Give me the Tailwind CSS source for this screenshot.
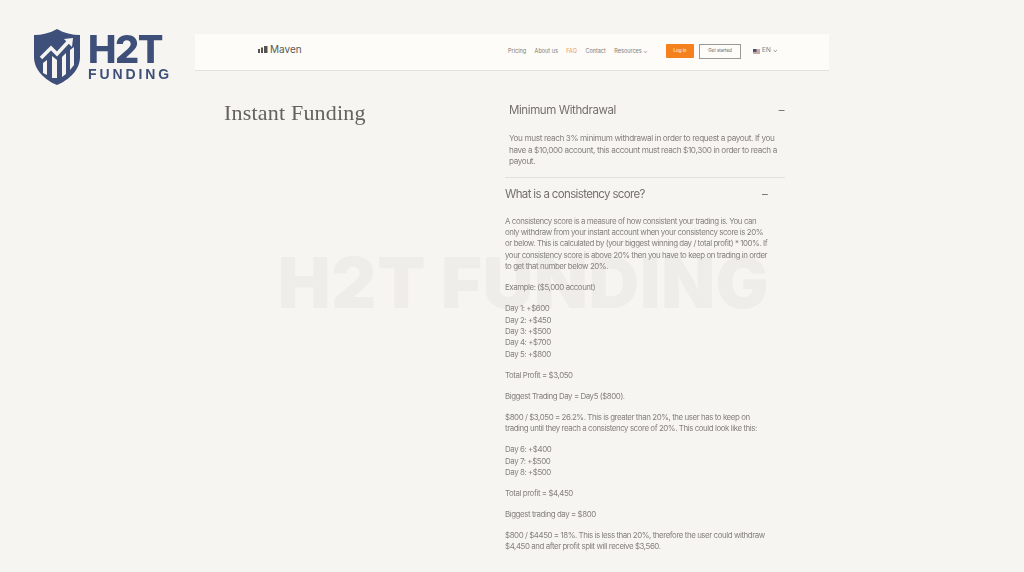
<!DOCTYPE html>
<html lang="en">
<head>
    <meta charset="UTF-8">
    <title>Instant Funding</title>
    <script src="https://cdn.jsdelivr.net/npm/@tailwindcss/browser@4"></script>
</head>
<body class="bg-[#f7f5f1] font-['Inter',sans-serif] text-[#85827d]">
    <div class="relative w-[1024px] h-[572px] overflow-hidden pt-[34px]">

        <!-- logo -->
        <div class="absolute left-[33px] top-[29px] flex items-center gap-[7px] text-[#3e5079] blur-[0.3px]">
            <svg width="48" height="56" viewBox="0 0 48 56">
                <path d="M24 0 C31 4 39 6 47 6 L47 28 C47 41 36 51 24 56 C12 51 1 41 1 28 L1 6 C9 6 17 4 24 0 Z" fill="#3e5079"/>
                <path d="M8 29 L18 19 L24 25 L35 13" fill="none" stroke="#f6f4f1" stroke-width="3.5"/>
                <path d="M31 10 L40 9 L39 18 Z" fill="#f6f4f1"/>
                <path d="M10 44 L10 34 L14 31 L14 46 Z M19 49 L19 27 L24 31 L24 49 Z M29 48 L29 28 L33 24 L33 45 Z M37 41 L37 21 L41 18 L41 36 Z" fill="#f6f4f1"/>
            </svg>
            <div class="flex flex-col -mt-[2px]">
                <span class="font-extrabold text-[38px] leading-[36px] tracking-[-1.5px]">H2T</span>
                <span class="font-['Liberation_Sans',sans-serif] font-bold text-[14px] leading-[15px] tracking-[2.9px]">FUNDING</span>
            </div>
        </div>

        <!-- watermark -->
        <div class="absolute left-[278px] top-[243px] font-black text-[70px] leading-[80px] tracking-[0.8px] text-[#efedea] whitespace-nowrap blur-[0.5px]">H2T FUNDING</div>

        <!-- page shot -->
        <div class="relative ml-[195px] w-[634px] blur-[0.35px]">
            <nav class="h-[37px] pb-[2px] bg-[#fdfcf9] border-b border-[#e3e1dd] flex items-center pl-[63px] text-[5.5px] text-[#7d7a75]">
                <div class="flex items-center gap-[2px] w-[250px] mb-[3px]">
                    <svg width="10" height="7" viewBox="0 0 10 7" fill="#55534f">
                        <rect x="0" y="3" width="2" height="4"/>
                        <rect x="3" y="1.5" width="2" height="5.5"/>
                        <rect x="6" y="0" width="3.5" height="7"/>
                    </svg>
                    <span class="text-[10px] text-[#5a5854]">Maven</span>
                </div>
                <div class="flex items-center gap-[8.5px] w-[158px]">
                    <span>Pricing</span>
                    <span>About us</span>
                    <span class="text-[#ee9a5c]">FAQ</span>
                    <span>Contact</span>
                    <span>Resources ⌄</span>
                </div>
                <span class="w-[28px] h-[14px] bg-[#f5811e] rounded-[1px] text-white flex items-center justify-center text-[4.5px]">Log in</span>
                <span class="ml-[5px] w-[42px] h-[15px] border border-[#9c9a96] text-[#55534f] flex items-center justify-center text-[4.5px]">Get started</span>
                <div class="ml-[12px] flex items-center gap-[2px] text-[6.5px]">
                    <svg width="7" height="5" viewBox="0 0 7 5">
                        <rect width="7" height="5" fill="#c9a8a8"/>
                        <rect width="3.5" height="3" fill="#4b5270"/>
                    </svg>
                    <span>EN ⌄</span>
                </div>
            </nav>

            <div class="flex">
                <h1 class="ml-[29px] mt-[29px] w-[281px] font-['Liberation_Serif',serif] text-[22px] leading-[26px] text-[#64625e] tracking-[0.2px]">Instant Funding</h1>

                <div class="w-[280px]">
                    <!-- first faq -->
                    <div class="border-b border-[#e3e1dd] pb-[9px]">
                        <div class="flex justify-between items-center pl-[4px] pt-[30px] text-[11.5px] leading-[18px] tracking-[-0.4px] text-[#74716d]">
                            <span>Minimum Withdrawal</span>
                            <span class="pr-[1px]">–</span>
                        </div>
                        <p class="pl-[4px] mt-[14px] text-[8.2px] leading-[11.5px] tracking-[-0.38px] whitespace-nowrap">You must reach 3% minimum withdrawal in order to request a payout. If you<br>have a $10,000 account, this account must reach $10,300 in order to reach a<br>payout.</p>
                    </div>

                    <!-- second faq -->
                    <div class="flex justify-between items-center pt-[7px] pr-[18px] text-[11.5px] leading-[18px] tracking-[-0.65px] text-[#74716d]">
                        <span>What is a consistency score?</span>
                        <span>–</span>
                    </div>
                    <div class="mt-[13px] flex flex-col gap-[9.6px] text-[7.9px] leading-[11.4px] tracking-[-0.43px] whitespace-nowrap">
                        <p>A consistency score is a measure of how consistent your trading is. You can<br>only withdraw from your instant account when your consistency score is 20%<br>or below. This is calculated by (your biggest winning day / total profit) * 100%. If<br>your consistency score is above 20% then you have to keep on trading in order<br>to get that number below 20%.</p>
                        <p>Example: ($5,000 account)</p>
                        <p>Day 1: +$600<br>Day 2: +$450<br>Day 3: +$500<br>Day 4: +$700<br>Day 5: +$800</p>
                        <p>Total Profit = $3,050</p>
                        <p>Biggest Trading Day = Day5 ($800).</p>
                        <p>$800 / $3,050 = 26.2%. This is greater than 20%, the user has to keep on<br>trading until they reach a consistency score of 20%. This could look like this:</p>
                        <p>Day 6: +$400<br>Day 7: +$500<br>Day 8: +$500</p>
                        <p>Total profit = $4,450</p>
                        <p>Biggest trading day = $800</p>
                        <p>$800 / $4450 = 18%. This is less than 20%, therefore the user could withdraw<br>$4,450 and after profit split will receive $3,560.</p>
                    </div>
                </div>
            </div>
        </div>
    </div>
</body>
</html>
